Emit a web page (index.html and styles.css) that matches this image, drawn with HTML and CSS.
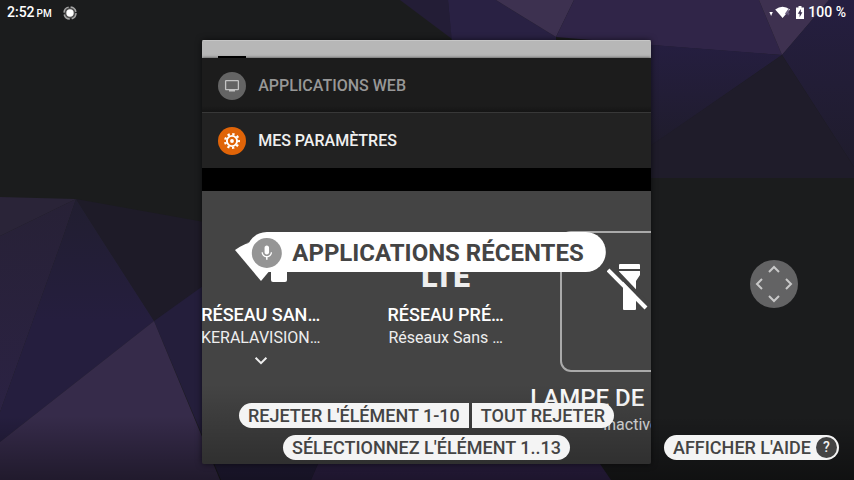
FILE: index.html
```html
<!DOCTYPE html>
<html lang="fr">
<head>
<meta charset="utf-8">
<meta name="viewport" content="width=device-width, initial-scale=1">
<title>Applications récentes</title>
<link rel="stylesheet" href="styles.css">
</head>
<body>
<div class="screen">
  <svg class="wallpaper" viewBox="0 0 854 480" preserveAspectRatio="none" aria-hidden="true">
    <defs>
      <linearGradient id="fadeA" x1="0" y1="0" x2="0" y2="1"><stop offset="0" stop-color="#211e30"/><stop offset=".5" stop-color="#251e3e"/><stop offset="1" stop-color="#251e3e"/></linearGradient>
      <linearGradient id="fadeB" x1="0" y1="0" x2="0" y2="1"><stop offset="0" stop-color="#272136"/><stop offset="1" stop-color="#2b2243"/></linearGradient>
      <linearGradient id="fadeC" x1="0" y1="0" x2="0" y2="1"><stop offset="0" stop-color="#251e40"/><stop offset="1" stop-color="#1f1c2c"/></linearGradient>
    </defs>
    <path fill="#1b1c1d" d="M0 0h854v480H0z"/>
    <path fill="#2a2438" d="M0 197l76 2L0 236z"/>
    <path fill="url(#fadeB)" d="M0 236l76-37-14 41L0 412z"/>
    <path fill="#1e1b28" d="M76 199l134 24v60l-56 38-52-81z"/>
    <path fill="url(#fadeA)" d="M76 199l26 41 52 81L0 442v-30l62-172z"/>
    <path fill="#241e3b" d="M154 321l56-40h130l-22 183-7 16h-90z"/>
    <path fill="#362b4a" d="M154 321L0 442v38h220z"/>
    <path fill="#31234b" d="M318 464h282l11 16H311z"/>
    <path fill="#231d36" d="M400 0h48l4 39z"/>
    <path fill="#292143" d="M448 0h48l60 37v6H452z"/>
    <path fill="#3d3150" d="M496 0h78l-18 37z"/>
    <path fill="#302548" d="M574 0h185l23 55-131-10-95-8z"/>
    <path fill="#3e3150" d="M759 0h70l-47 55z"/>
    <path fill="url(#fadeC)" d="M829 0h25v167L782 55z"/>
    <path fill="url(#fadeC)" d="M640 44l142 11-131 91h-11z"/>
    <path fill="#1f1c2a" d="M782 55l72 112v11H640v-25z"/>
  </svg>

  <header class="status">
    <div class="status-group">
      <span class="clock">2:52<small>PM</small></span>
      <svg width="14" height="14" viewBox="0 0 14 14" aria-hidden="true"><circle cx="7" cy="7" r="5.500" fill="#4c4c4c"/><circle cx="7" cy="7" r="6" fill="none" stroke="#a6a6a6" stroke-width="1.500" stroke-dasharray="7.400 2"/><circle cx="7" cy="7" r="3.700" fill="#fff"/></svg>
    </div>
    <div class="status-group status-right">
      <svg width="28" height="14" viewBox="0 0 28 14" aria-hidden="true"><path fill="#fff" d="M1.400 6h3.400L3.100 10z"/><path fill="#fff" d="M7.200 3.400Q14.500-2 22 3.400L14.600 12z"/><path d="M17.500 7.700L20.200 4v5.300M17.300 7.800h4.200" fill="none" stroke="#65597b" stroke-width="1.100"/></svg>
      <svg width="8" height="14" viewBox="0 0 8 14" aria-hidden="true"><path fill="#fff" d="M2.500 0h3v1.500H8V13H0V1.500h2.500z"/><path fill="#3b304f" d="M4.800 3L1.800 7.700h1.800v3.500l2.800-4.900H4.800z"/></svg>
      <span class="clock">100 %</span>
    </div>
  </header>

  <main class="recents">
    <section class="peek"><span class="peek-icon"></span></section>
    <section class="task task-web">
      <span class="task-icon"><svg width="16" height="14" viewBox="0 0 16 14" aria-hidden="true"><rect x="1.600" y="1.600" width="12.800" height="9" rx=".6" fill="none" stroke="#c4c4c4" stroke-width="1.300"/><path fill="#c4c4c4" d="M5 10.600h6v1.800H5z"/></svg></span>
      <h2>APPLICATIONS WEB</h2>
    </section>
    <section class="task task-settings">
      <span class="task-icon"><svg width="18" height="18" viewBox="-9 -9 18 18" aria-hidden="true"><g stroke="#fff" fill="none"><circle r="5.100" stroke-width="1.900"/><circle r="6.900" stroke-width="2.300" stroke-dasharray="2.300 2.517" stroke-dashoffset="1.150"/></g><circle r="1.900" fill="#fff"/></svg></span>
      <h2>MES PARAMÈTRES</h2>
    </section>
    <div class="preview-bar"></div>
    <section class="tiles">
      <div class="tile">
        <svg class="tile-icon" width="56" height="52" viewBox="0 0 56 52" aria-hidden="true"><path fill="#fff" d="M2 19Q28 1 54 19L28 50z"/><rect x="36" y="27" width="20" height="27" fill="#444"/><rect x="38" y="30" width="16" height="21" rx="2" fill="#fff"/></svg>
        <strong>RÉSEAU SAN…</strong>
        <span>KERALAVISION…</span>
        <svg class="more" width="14" height="10" viewBox="0 0 14 10" aria-hidden="true"><path d="M1.600 1.800L7 7.200l5.400-5.400" fill="none" stroke="#eee" stroke-width="2"/></svg>
      </div>
      <div class="tile">
        <b class="tile-icon lte">LTE</b>
        <strong>RÉSEAU PRÉ…</strong>
        <span>Réseaux Sans …</span>
      </div>
      <div class="tile tile-large">
        <div class="tile-box"><svg width="44" height="50" viewBox="0 0 44 50" aria-hidden="true"><path fill="#fff" d="M12 3q0-1 1-1h19q1 0 1 1v4H12zM12 9h21v4l-4 6v28q0 1-1 1H17q-1 0-1-1V19l-4-6z"/><path d="M4 4l37 39" stroke="#444" stroke-width="4"/><path d="M1 8l38 38" stroke="#fff" stroke-width="4"/></svg></div>
        <strong>LAMPE DE</strong>
        <span>Inactive</span>
      </div>
    </section>

    <h1 class="voice-title">
      <span class="mic"><svg width="18" height="18" viewBox="0 0 24 24" aria-hidden="true"><path fill="#fff" d="M12 14c1.660 0 3-1.340 3-3V5c0-1.660-1.340-3-3-3S9 3.340 9 5v6c0 1.660 1.340 3 3 3zm5.300-3c0 3-2.540 5.100-5.300 5.100S6.700 14 6.700 11H5c0 3.410 2.720 6.230 6 6.720V21h2v-3.280c3.280-.48 6-3.300 6-6.720z"/></svg></span>
      APPLICATIONS RÉCENTES
    </h1>
    <div class="voice-actions">
      <div class="voice-row"><button class="pill pill-start" type="button">REJETER L'ÉLÉMENT 1-10</button><button class="pill pill-end" type="button">TOUT REJETER</button></div>
      <button class="pill" type="button">SÉLECTIONNEZ L'ÉLÉMENT 1..13</button>
    </div>
  </main>

  <button class="dpad" type="button" aria-label="Navigation">
    <svg width="48" height="48" viewBox="-24 -24 48 48" aria-hidden="true"><path d="M-5-12l5-5 5 5M-5 12l5 5 5-5M-12-5l-5 5 5 5M12-5l5 5-5 5" fill="none" stroke="#c9c9c9" stroke-width="2"/></svg>
  </button>
  <button class="pill help" type="button">AFFICHER L'AIDE <span class="help-mark">?</span></button>
</div>
</body>
</html>
```
FILE: styles.css
```css
* { box-sizing: border-box; }
body {
  margin: 0;
  background: #1b1c1d;
  color: #fff;
  font-family: Roboto, "Noto Sans", sans-serif;
}
h1, h2 { margin: 0; }
button { border: 0; font: inherit; }
svg { display: block; flex: none; }

.screen {
  position: relative;
  display: flex;
  flex-direction: column;
  min-height: 100vh;
  padding: 0 1px 16px 0;
  overflow: hidden;
}
.screen::before {
  content: "";
  position: absolute;
  inset: auto 0 0;
  height: 64px;
  background: linear-gradient(transparent, rgba(0, 0, 0, .4));
  z-index: 1;
}
.wallpaper {
  position: absolute;
  inset: 0;
  width: 100%;
  height: 100%;
}

.status {
  position: relative;
  display: flex;
  justify-content: space-between;
  height: 40px;
  padding: 4px 7px 0;
}
.status-group {
  display: flex;
  align-items: center;
  gap: 11px;
  height: 17px;
}
.status-right { gap: 0; }
.status-right .clock { margin-left: 4px; }
.clock {
  display: flex;
  align-items: baseline;
  gap: 2px;
  font-size: 14px;
  font-weight: 500;
  line-height: 17px;
}
.clock small { font-size: 10px; }

.recents {
  position: relative;
  flex: 1;
  display: flex;
  flex-direction: column;
  width: 52.6%;
  margin: 0 auto;
  border-radius: 2px;
  background: #444;
  box-shadow: 0 0 6px rgba(0, 0, 0, .6);
  overflow: hidden;
}
.peek {
  display: flex;
  align-items: flex-end;
  height: 18px;
  padding-left: 16px;
  border-top: 1px solid #c6c6c6;
  background: #b7b7b7;
}
.peek-icon { width: 28px; height: 2px; background: #000; }
.task {
  display: flex;
  align-items: center;
  gap: 12px;
  padding: 0 16px;
}
.task h2 { font-size: 16px; font-weight: 500; line-height: 20px; }
.task-web {
  height: 54px;
  padding-top: 2px;
  background: linear-gradient(#1c1c1c 48px, #151515);
  color: #979797;
  box-shadow: 0 0 3px rgba(0, 0, 0, .7);
}
.task-settings {
  height: 56px;
  background: #222;
  border-top: 1px solid #383838;
  color: #f0f0f0;
}
.task-icon {
  display: grid;
  place-items: center;
  width: 28px;
  height: 28px;
  border-radius: 50%;
  background: #646464;
}
.task-settings .task-icon { background: #e06408; }
.preview-bar { height: 23px; background: #000; }

.tiles {
  display: grid;
  grid-template-columns: repeat(3, 185px);
  margin-left: -34px;
}
.tile {
  display: flex;
  flex-direction: column;
  align-items: center;
  padding-top: 40px;
  white-space: nowrap;
}
.tile-icon { height: 52px; margin-bottom: 20px; }
.tile strong { font-size: 18px; font-weight: 500; line-height: 24px; }
.tile span { font-size: 16px; line-height: 22px; color: #eee; }
.lte {
  padding-top: 28px;
  font-size: 30px;
  font-weight: 900;
  line-height: 36px;
  color: #eee;
}
.more { margin-top: 7px; }
.tile-box {
  display: grid;
  place-items: center;
  width: 141px;
  height: 141px;
  padding: 0 4px 30px 0;
  margin-bottom: 12px;
  border: 2px solid #aaa;
  border-radius: 11px;
}
.tile-large strong {
  align-self: flex-start;
  margin-left: -8px;
  font-size: 24px;
  line-height: 28px;
}
.tile-large span { line-height: 26px; }

.voice-title {
  position: absolute;
  top: 192px;
  left: 50%;
  transform: translateX(-50%);
  display: flex;
  align-items: center;
  gap: 10px;
  height: 40px;
  padding: 2px 22px 0 5px;
  border-radius: 20px;
  background: #fff;
  color: #444;
  font-size: 24px;
  font-weight: 700;
  white-space: nowrap;
}
.mic {
  display: grid;
  place-items: center;
  width: 30px;
  height: 30px;
  border-radius: 50%;
  background: #959595;
}
.voice-actions {
  position: absolute;
  inset: auto 0 4px;
  display: flex;
  flex-direction: column;
  align-items: center;
  gap: 7px;
}
.voice-row { display: flex; gap: 3px; }
.pill {
  height: 25px;
  padding: 0 9px;
  border-radius: 13px;
  background: #f4f4f4;
  color: #444;
  font-size: 18px;
  font-weight: 500;
  line-height: 25px;
  white-space: nowrap;
}
.pill-start { border-radius: 13px 0 0 13px; }
.pill-end { border-radius: 0 13px 13px 0; }
.recents, .help { z-index: 2; }
.recents::before {
  content: "";
  position: absolute;
  inset: auto 0 0;
  height: 80px;
  background: linear-gradient(transparent, rgba(0, 0, 0, .3));
}

.dpad {
  position: absolute;
  top: 54.2%;
  right: 6.6%;
  width: 48px;
  height: 48px;
  padding: 0;
  border-radius: 50%;
  background: #636364;
}
.help {
  position: absolute;
  right: 15px;
  bottom: 20px;
  display: flex;
  align-items: center;
  gap: 5px;
  padding-right: 2px;
}
.help-mark {
  width: 21px;
  height: 21px;
  border-radius: 50%;
  background: #444;
  color: #f4f4f4;
  font-size: 14px;
  line-height: 21px;
  text-align: center;
}
```
